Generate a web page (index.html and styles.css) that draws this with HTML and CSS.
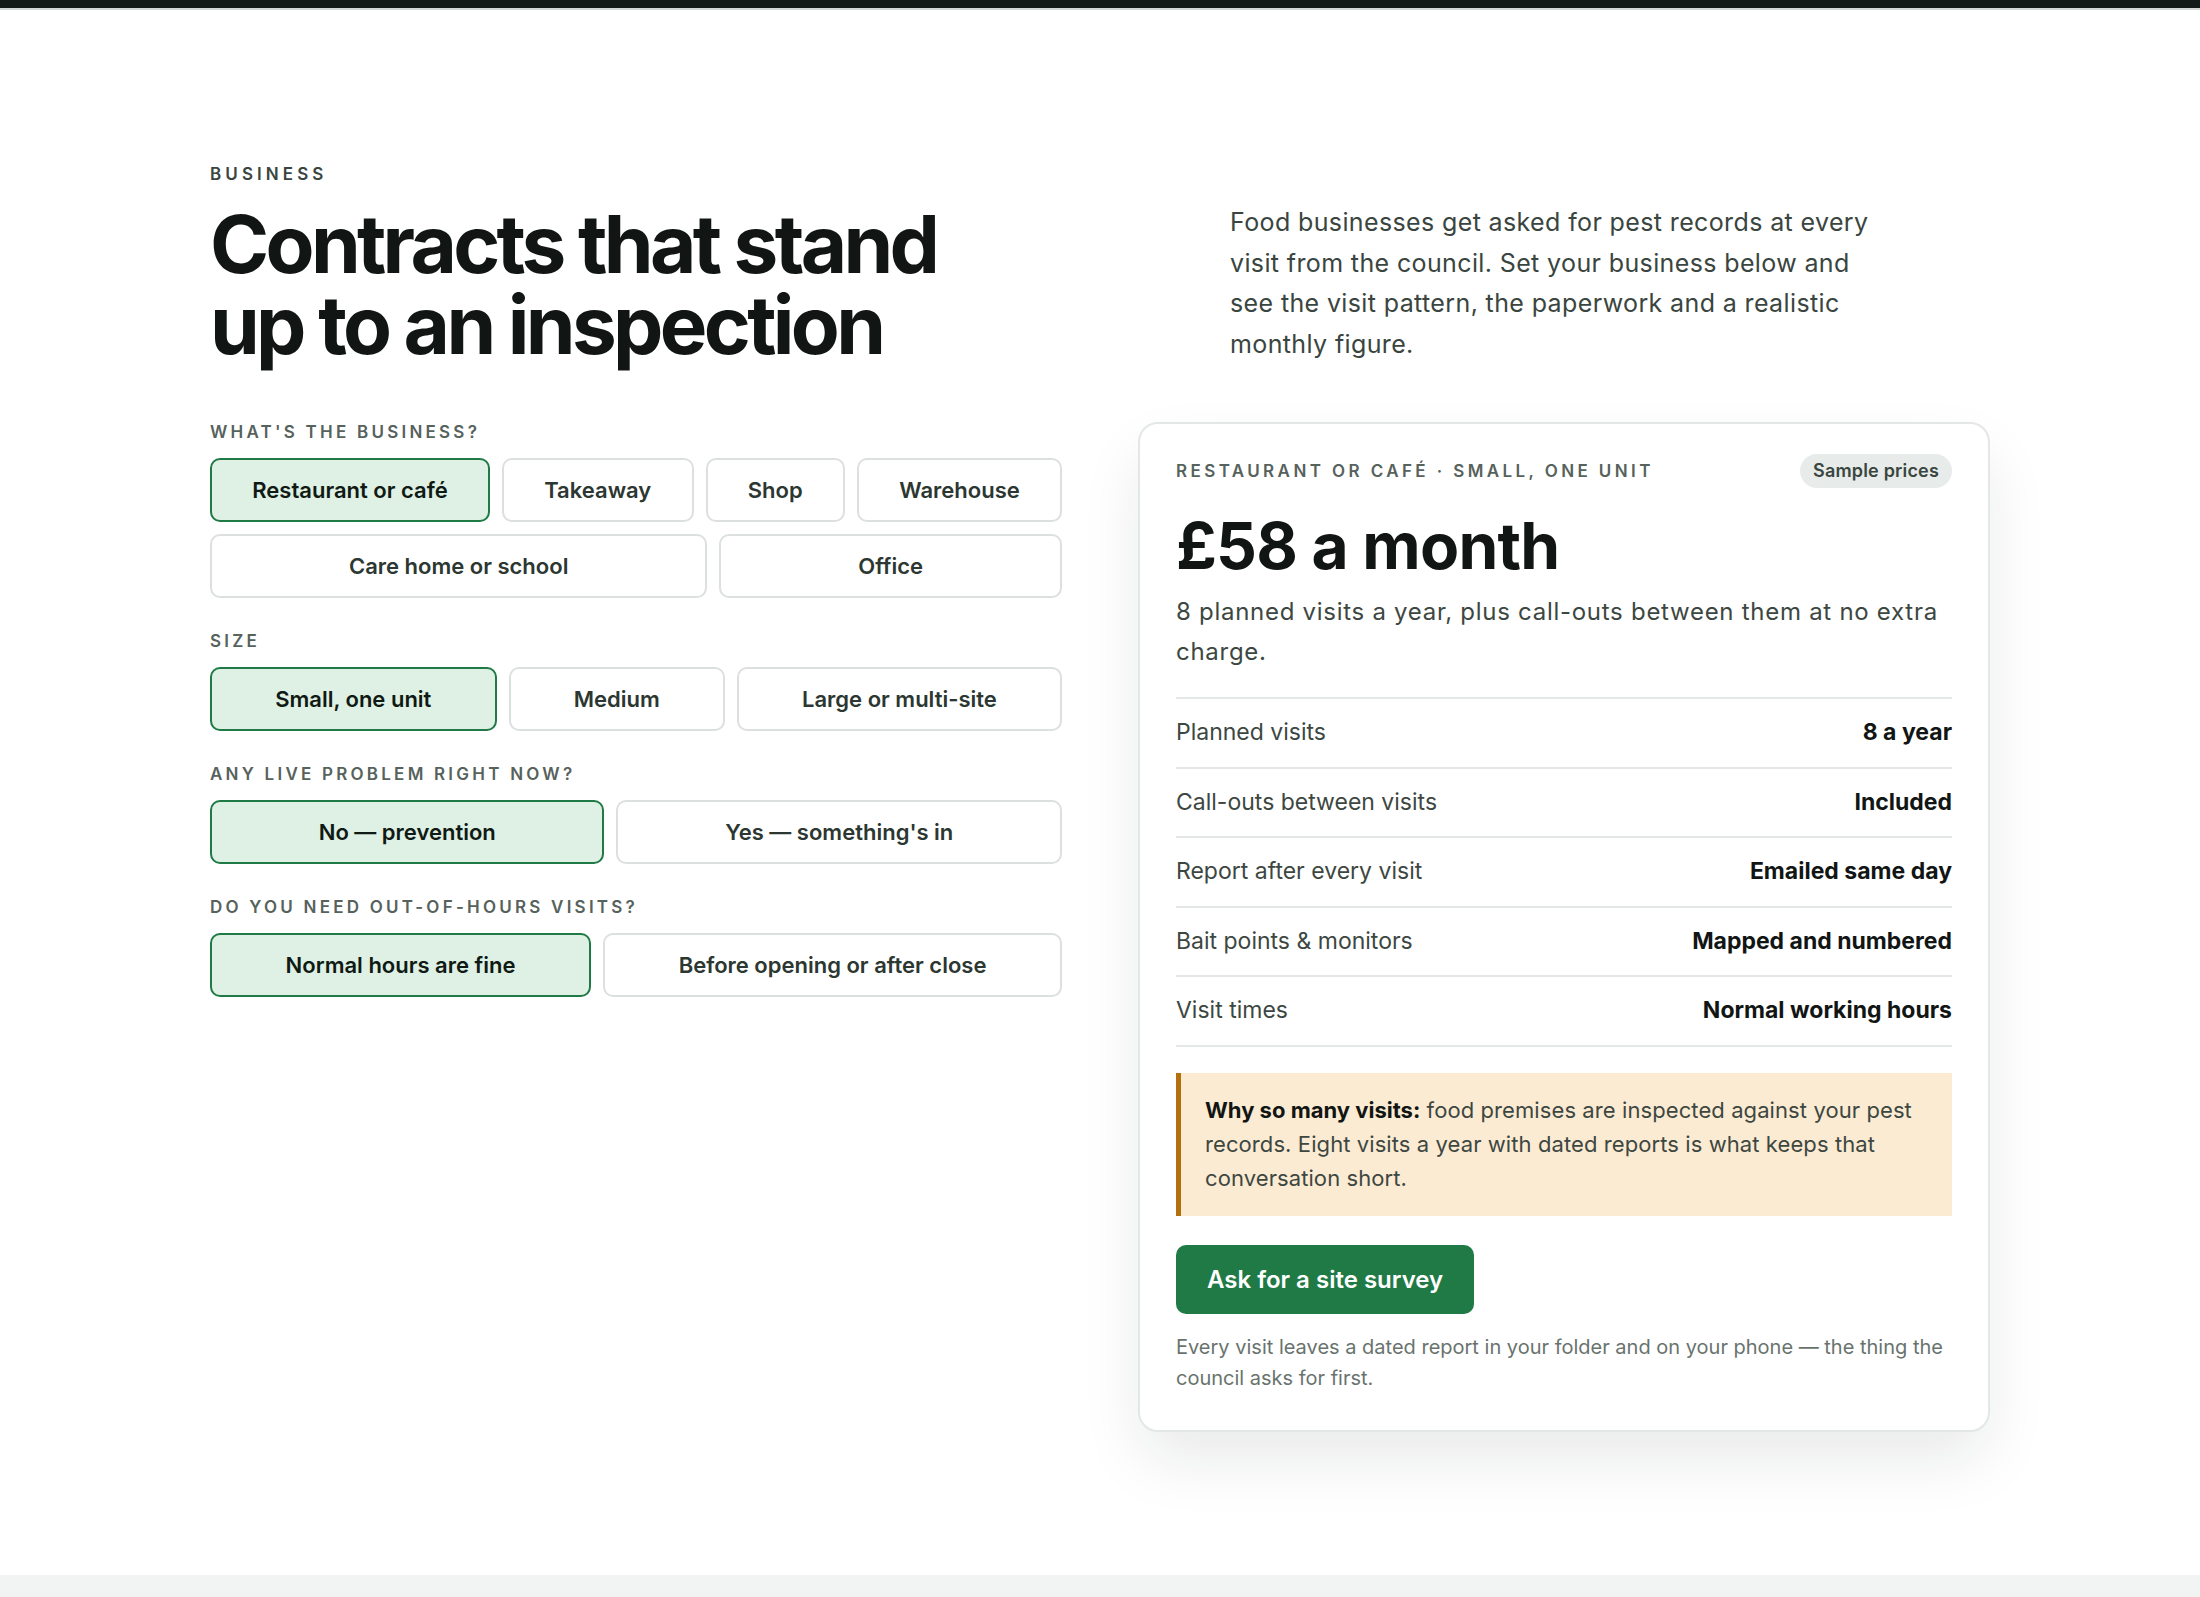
FILE: index.html
```html
<!DOCTYPE html>
<html lang="en">
<head>
    <meta charset="UTF-8">
    <meta name="viewport" content="width=device-width, initial-scale=1.0">
    <title>Business contracts</title>
    <link rel="stylesheet" href="styles.css">
</head>
<body>
    <div class="topbar"></div>

    <section class="business">
        <div class="wrap">
            <header class="intro">
                <div class="intro-title">
                    <p class="eyebrow">Business</p>
                    <h1>Contracts that stand up to an inspection</h1>
                </div>
                <p class="lede">Food businesses get asked for pest records at every visit from the council. Set your business below and see the visit pattern, the paperwork and a realistic monthly figure.</p>
            </header>

            <div class="layout">
                <!-- choices -->
                <div class="picker">
                    <div class="group">
                        <div class="group-label">What's the business?</div>
                        <div class="options">
                            <button type="button" class="option selected">Restaurant or café</button>
                            <button type="button" class="option">Takeaway</button>
                            <button type="button" class="option">Shop</button>
                            <button type="button" class="option">Warehouse</button>
                            <button type="button" class="option">Care home or school</button>
                            <button type="button" class="option">Office</button>
                        </div>
                    </div>

                    <div class="group">
                        <div class="group-label">Size</div>
                        <div class="options">
                            <button type="button" class="option selected">Small, one unit</button>
                            <button type="button" class="option">Medium</button>
                            <button type="button" class="option">Large or multi-site</button>
                        </div>
                    </div>

                    <div class="group">
                        <div class="group-label">Any live problem right now?</div>
                        <div class="options">
                            <button type="button" class="option selected">No — prevention</button>
                            <button type="button" class="option">Yes — something's in</button>
                        </div>
                    </div>

                    <div class="group">
                        <div class="group-label">Do you need out-of-hours visits?</div>
                        <div class="options">
                            <button type="button" class="option selected">Normal hours are fine</button>
                            <button type="button" class="option">Before opening or after close</button>
                        </div>
                    </div>
                </div>

                <!-- quote card -->
                <aside class="quote">
                    <div class="quote-top">
                        <span class="quote-meta">Restaurant or café · Small, one unit</span>
                        <span class="pill">Sample prices</span>
                    </div>
                    <div class="price">£58 a month</div>
                    <p class="price-note">8 planned visits a year, plus call-outs between them at no extra charge.</p>

                    <dl class="facts">
                        <div class="fact"><dt>Planned visits</dt><dd>8 a year</dd></div>
                        <div class="fact"><dt>Call-outs between visits</dt><dd>Included</dd></div>
                        <div class="fact"><dt>Report after every visit</dt><dd>Emailed same day</dd></div>
                        <div class="fact"><dt>Bait points &amp; monitors</dt><dd>Mapped and numbered</dd></div>
                        <div class="fact"><dt>Visit times</dt><dd>Normal working hours</dd></div>
                    </dl>

                    <div class="callout">
                        <strong>Why so many visits:</strong> food premises are inspected against your pest records. Eight visits a year with dated reports is what keeps that conversation short.
                    </div>

                    <a href="#" class="cta">Ask for a site survey</a>

                    <p class="footnote">Every visit leaves a dated report in your folder and on your phone — the thing the council asks for first.</p>
                </aside>
            </div>
        </div>
    </section>

    <div class="next-section"></div>
</body>
</html>
```

FILE: styles.css
```css
* {
    margin: 0;
    padding: 0;
    box-sizing: border-box;
}

body {
    font-family: Inter, "Noto Sans", "Liberation Sans", sans-serif;
    background: #fff;
    color: #111614;
}

.topbar {
    height: 10px;
    background: #131a17;
    border-bottom: 2px solid #d3d8d5;
}

.business {
    padding: 152px 0 143px;
}

.wrap {
    max-width: 1780px;
    margin: 0 auto;
}

/* intro */
.intro {
    display: grid;
    grid-template-columns: 940px 1fr;
    column-gap: 80px;
    align-items: end;
}

.eyebrow {
    font-size: 17px;
    line-height: 24px;
    font-weight: 600;
    letter-spacing: 0.24em;
    text-transform: uppercase;
    color: #39453f;
    margin-bottom: 17px;
}

.intro h1 {
    font-size: 80px;
    line-height: 81px;
    font-weight: 700;
    letter-spacing: -0.046em;
    color: #111614;
    max-width: 800px;
}

.lede {
    font-size: 25px;
    line-height: 40.8px;
    letter-spacing: 0.015em;
    color: #3a4540;
    max-width: 660px;
}

/* main layout */
.layout {
    display: grid;
    grid-template-columns: 1fr 1fr;
    column-gap: 76px;
    align-items: start;
    margin-top: 55px;
}

.group + .group {
    margin-top: 31px;
}

.group-label {
    font-size: 17px;
    line-height: 24px;
    font-weight: 600;
    letter-spacing: 0.19em;
    text-transform: uppercase;
    color: #56625c;
    margin-bottom: 14px;
}

.options {
    display: flex;
    flex-wrap: wrap;
    gap: 12px;
}

.option {
    flex: 1 1 auto;
    font-family: inherit;
    font-size: 22px;
    line-height: 30px;
    font-weight: 600;
    color: #2c3731;
    background: #fff;
    border: 2px solid #dce0de;
    border-radius: 10px;
    padding: 15px 20px;
    cursor: pointer;
}

.option.selected {
    background: #dff0e4;
    border-color: #1f7a45;
    color: #0f1a14;
}

/* quote card */
.quote {
    margin-top: 2px;
    background: #fff;
    border: 2px solid #e3e7e5;
    border-radius: 20px;
    padding: 30px 36px 36px;
    box-shadow: 0 30px 64px -6px rgba(20, 32, 26, 0.1);
}

.quote-top {
    display: flex;
    justify-content: space-between;
    align-items: center;
}

.quote-meta {
    font-size: 17px;
    line-height: 24px;
    font-weight: 600;
    letter-spacing: 0.2em;
    text-transform: uppercase;
    color: #56625c;
}

.pill {
    font-size: 18px;
    line-height: 34px;
    font-weight: 600;
    letter-spacing: 0.01em;
    color: #3a4640;
    background: #e7ebe9;
    border-radius: 17px;
    padding: 0 13px;
}

.price {
    margin-top: 23px;
    font-size: 64px;
    line-height: 70px;
    font-weight: 700;
    letter-spacing: -0.012em;
    color: #111614;
}

.price-note {
    margin-top: 11px;
    font-size: 24px;
    line-height: 40px;
    letter-spacing: 0.03em;
    color: #3d4741;
}

.facts {
    margin-top: 25px;
    border-top: 2px solid #e3e7e5;
}

.fact {
    display: flex;
    justify-content: space-between;
    align-items: center;
    padding: 17px 0;
    border-bottom: 2px solid #e3e7e5;
    font-size: 23px;
    line-height: 33.5px;
}

.fact dt {
    color: #3d4741;
}

.fact dd {
    font-weight: 700;
    color: #111614;
}

.callout {
    margin-top: 26px;
    background: #fcebd3;
    border-left: 5px solid #b5700e;
    padding: 20px 24px 21px;
    font-size: 22px;
    line-height: 34px;
    letter-spacing: 0.004em;
    color: #3d4741;
}

.callout strong {
    font-weight: 700;
    letter-spacing: 0;
    color: #111614;
}

.cta {
    display: inline-block;
    margin-top: 29px;
    background: #1f7a46;
    color: #fff;
    text-decoration: none;
    font-size: 24px;
    line-height: 33px;
    font-weight: 600;
    padding: 18px 31px;
    border-radius: 10px;
}

.cta:hover {
    background: #1a6a3c;
}

.footnote {
    margin-top: 18px;
    font-size: 20px;
    line-height: 31px;
    color: #69736e;
}

.next-section {
    height: 200px;
    background: #f2f4f3;
}
```
